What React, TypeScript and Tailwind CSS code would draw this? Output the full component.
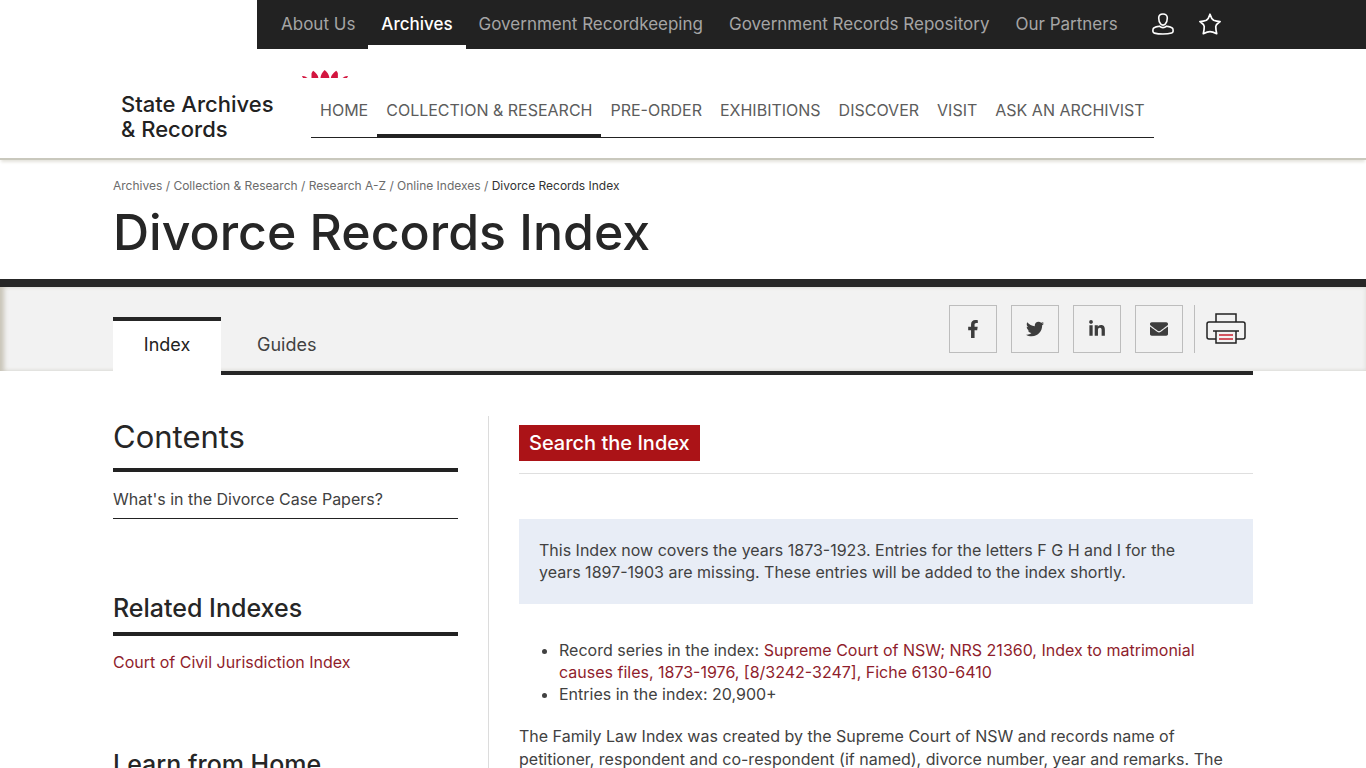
import React from "react";
import { FaEnvelope, FaFacebookF, FaLinkedinIn, FaTwitter } from "react-icons/fa";

const SITE_LINKS = [
  "About Us",
  "Archives",
  "Government Recordkeeping",
  "Government Records Repository",
  "Our Partners",
];

const SECTION_LINKS = [
  "Home",
  "Collection & Research",
  "Pre-order",
  "Exhibitions",
  "Discover",
  "Visit",
  "Ask an Archivist",
];

const BREADCRUMBS = ["Archives", "Collection & Research", "Research A-Z", "Online Indexes"];

const SHARE_LINKS = [
  { label: "Share on Facebook", Icon: FaFacebookF },
  { label: "Share on Twitter", Icon: FaTwitter },
  { label: "Share on LinkedIn", Icon: FaLinkedinIn },
  { label: "Share by email", Icon: FaEnvelope },
];

function UserIcon() {
  return (
    <svg width="22" height="22" viewBox="0 0 22 22" fill="none" stroke="currentColor" strokeWidth="1.6" aria-hidden="true">
      <path d="M11 1C8.400 1 6.700 2.600 6.700 5c0 2.200.7 4.600 2 6 .6.700 1.400 1.100 2.300 1.100s1.700-.4 2.300-1.100c1.300-1.400 2-3.800 2-6 0-2.400-1.700-4-4.300-4Z" />
      <path d="M7.500 13.200c-2.600.3-5 .9-5.900 1.900-.6.800-.8 2.400-.6 3.600.1.800.6 1.200 1.400 1.400 2.300.6 5.400.9 8.600.9s6.300-.3 8.600-.9c.8-.2 1.300-.6 1.400-1.400.2-1.200 0-2.800-.6-3.600-.9-1-3.300-1.600-5.900-1.900-1 .9-2.200 1.400-3.500 1.400s-2.500-.5-3.500-1.400Z" />
    </svg>
  );
}

function StarIcon() {
  return (
    <svg width="22" height="22" viewBox="0 0 22 22" fill="none" stroke="currentColor" strokeWidth="1.7" strokeLinejoin="round" aria-hidden="true">
      <path d="M11 1.200Q12.400 5.800 14.600 7.300 17.500 8.400 21.100 8.500 17.300 11.200 16.800 13.400 16.700 16.500 17.700 20.700 13.500 18.600 11 18.600 8.500 18.600 4.300 20.700 5.300 16.500 5.200 13.400 4.700 11.200.9 8.500 4.500 8.400 7.400 7.300 9.600 5.800 11 1.200Z" />
    </svg>
  );
}

function PrinterIcon() {
  return (
    <svg width="40" height="32" viewBox="0 0 40 32" fill="none" stroke="#222" strokeWidth="1.500" aria-hidden="true">
      <path d="M10 9V1h20v8" />
      <path d="M10 26H3a2 2 0 0 1-2-2V11a2 2 0 0 1 2-2h34a2 2 0 0 1 2 2v13a2 2 0 0 1-2 2h-7" />
      <path d="M7 18h26M10 18v12h20V18" />
      <path d="M13 22h14M13 26h14" stroke="#c8202f" />
    </svg>
  );
}

// Tips of the waratah petals above the wordmark
function WaratahIcon() {
  return (
    <svg className="absolute -top-[22px] left-[180px]" width="48" height="8" viewBox="0 0 48 8" fill="#d3153f" aria-hidden="true">
      <path d="M10.500 8V3.500Q11 2 12.200.8 16.800 4 17.400 8Z" />
      <path d="M19.500 8q.5-5 4.200-8 4 3 4.700 8Z" />
      <path d="M29.800 8Q30.500 4 35.200.8 36.600 2 36.900 3.500V8Z" />
      <path d="M1 6q3-.3 5.500 2H2Z" />
      <path d="M47 6q-3-.3-5.500 2H46Z" />
    </svg>
  );
}

export default function App() {
  return (
    <div className="min-h-screen bg-white font-['Inter','Liberation_Sans',sans-serif] text-[#414141]">
      <nav aria-label="Sites" className="ml-[257px] flex h-[49px] items-stretch bg-[#222] pl-[11px] text-[17px] text-[#a5a5a5]">
        {SITE_LINKS.map((label) => (
          <a
            key={label}
            href="#"
            className={`flex items-center whitespace-nowrap border-b-4 px-[13px] pt-1 ${
              label === "Archives" ? "border-white font-medium text-white" : "border-transparent"
            }`}
          >
            {label}
          </a>
        ))}
        <div className="ml-[21px] flex items-center gap-[25px] pb-0.5 text-white">
          <a href="#" aria-label="My account"><UserIcon /></a>
          <a href="#" aria-label="Favourites"><StarIcon /></a>
        </div>
      </nav>

      <header className="border-b-2 border-[#c9c8bd] shadow-[0_3px_3px_-1px_#e4e3dc]">
        <div className="mx-auto flex max-w-[1140px] items-start pb-4 pl-2 pt-[29px]">
          <a href="#" className="relative mt-[14px] w-[190px] shrink-0 text-[22px] font-medium leading-[25px] text-[#222]">
            State Archives
            <br />
            &amp; Records
            <WaratahIcon />
          </a>
          <nav aria-label="Archives" className="flex h-[60px] border-b border-[#222] text-[16px] uppercase text-[#5c5c5c]">
            {SECTION_LINKS.map((label) => (
              <a
                key={label}
                href="#"
                className={`-mb-px flex items-center whitespace-nowrap border-b-4 px-[9px] pt-2 ${
                  label === "Collection & Research" ? "border-[#222]" : "border-transparent"
                }`}
              >
                {label}
              </a>
            ))}
          </nav>
        </div>
      </header>

      <div className="border-b-8 border-[#262626]">
        <div className="mx-auto max-w-[1140px] pb-[18px] pt-[18px]">
          <nav aria-label="Breadcrumb" className="text-[12px] leading-4 text-[#6b6b6b]">
            {BREADCRUMBS.map((label) => (
              <React.Fragment key={label}>
                <a href="#">{label}</a>
                {" / "}
              </React.Fragment>
            ))}
            <span className="text-[#333]">Divorce Records Index</span>
          </nav>
          <h1 className="mt-[9px] text-[50px] font-medium leading-[58px] text-[#262626]">Divorce Records Index</h1>
        </div>
      </div>

      <div className="h-[84px] bg-[#f2f2f2] shadow-[inset_6px_0_5px_-2px_#c9c5b9,inset_0_0_4px_#dcdcd8]">
        <div className="mx-auto flex h-[88px] max-w-[1140px]">
          <a href="#" className="mt-[30px] flex w-[108px] items-center justify-center border-t-4 border-[#262626] bg-white pb-2 text-[18px] text-[#222]">
            Index
          </a>
          <div className="flex flex-1 justify-between border-b-4 border-[#262626] pt-[18px]">
            <a href="#" className="mt-3 flex items-center px-9 text-[18px]">Guides</a>
            <div className="mr-[7px] flex items-start">
              <div className="flex gap-[14px]">
                {SHARE_LINKS.map(({ label, Icon }) => (
                  <a
                    key={label}
                    href="#"
                    aria-label={label}
                    className="flex size-12 items-center justify-center border border-[#bdbdbd] text-[18px] text-[#3d3d3d]"
                  >
                    <Icon />
                  </a>
                ))}
              </div>
              <div className="ml-[11px] flex h-12 items-center border-l border-[#bdbdbd] pl-[11px]">
                <button type="button" aria-label="Print"><PrinterIcon /></button>
              </div>
            </div>
          </div>
        </div>
      </div>

      <div className="mx-auto mt-[45px] flex max-w-[1140px] text-[16px] leading-[22px]">
        <aside className="w-[376px] shrink-0 border-r border-[#dcdcdc] pr-[30px]">
          <h2 className="border-b-4 border-[#222] pb-[10px] text-[31px] leading-[42px] text-[#262626]">Contents</h2>
          <a href="#" className="block border-b border-[#222] pb-2 pt-4">What's in the Divorce Case Papers?</a>

          <h3 className="mt-[73px] border-b-4 border-[#222] pb-2 text-[25px] font-medium leading-8 text-[#262626]">Related Indexes</h3>
          <a href="#" className="block pt-[15px] text-[#8f1d2c]">Court of Civil Jurisdiction Index</a>

          <h3 className="mt-[75px] text-[25px] font-medium leading-8 text-[#262626]">Learn from Home</h3>
        </aside>

        <main className="min-w-0 flex-1 pl-[30px] pt-[9px]">
          <div className="border-b border-[#dfdfdf] pb-3">
            <a href="#" className="inline-flex h-9 items-center bg-[#ab1317] px-[10px] text-[20px] font-medium text-white">
              Search the Index
            </a>
          </div>
          <p className="mt-[45px] bg-[#e8edf6] px-5 pb-[21px] pt-5">
            This Index now covers the years 1873-1923. Entries for the letters F G H and I for the
            <br />
            years 1897-1903 are missing. These entries will be added to the index shortly.
          </p>
          <ul className="mt-[35px] list-disc pl-10">
            <li>
              Record series in the index:{" "}
              <a href="#" className="text-[#8f1d2c]">
                Supreme Court of NSW; NRS 21360, Index to matrimonial
                <br />
                causes files, 1873-1976, [8/3242-3247], Fiche 6130-6410
              </a>
            </li>
            <li>Entries in the index: 20,900+</li>
          </ul>
          <p className="mt-5 leading-[23px]">
            The Family Law Index was created by the Supreme Court of NSW and records name of
            <br />
            petitioner, respondent and co-respondent (if named), divorce number, year and remarks. The
          </p>
        </main>
      </div>
    </div>
  );
}
